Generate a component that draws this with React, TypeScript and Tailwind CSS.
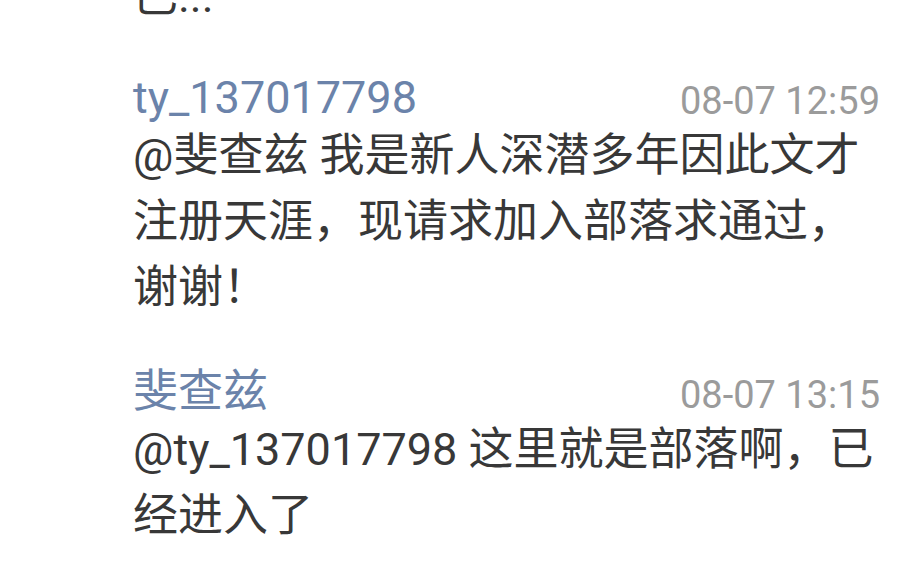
const FONT = "font-['Roboto','Noto_Sans_CJK_SC',sans-serif]";

type Comment = {
  user: string;
  time: string;
  body: string;
};

const comments: Comment[] = [
  {
    user: "ty_137017798",
    time: "08-07 12:59",
    body: "@斐查兹 我是新人深潜多年因此文才注册天涯，现请求加入部落求通过，谢谢！",
  },
  {
    user: "斐查兹",
    time: "08-07 13:15",
    body: "@ty_137017798 这里就是部落啊，已经进入了",
  },
];

function CommentItem({ c }: { c: Comment }) {
  return (
    <div className="py-[15px]">
      <div className="flex h-[66px] items-start justify-between pt-[15px]">
        <span className="text-[45px] leading-[51px] text-[#6b83aa]">{c.user}</span>
        <span className="mt-[4px] text-[38px] leading-[51px] text-[#9b9b9b]">{c.time}</span>
      </div>
      <p className="text-[45px] leading-[66px] text-[#383838]">{c.body}</p>
    </div>
  );
}

export default function App() {
  return (
    <div className={`h-[577px] w-[912px] overflow-hidden bg-white ${FONT}`}>
      <div className="-mt-[36px] pl-[133px] pr-[32px]">
        <p className="pb-[12px] text-[45px] leading-[66px] text-[#383838]">已...</p>
        {comments.map((c) => (
          <CommentItem key={c.user} c={c} />
        ))}
      </div>
    </div>
  );
}
